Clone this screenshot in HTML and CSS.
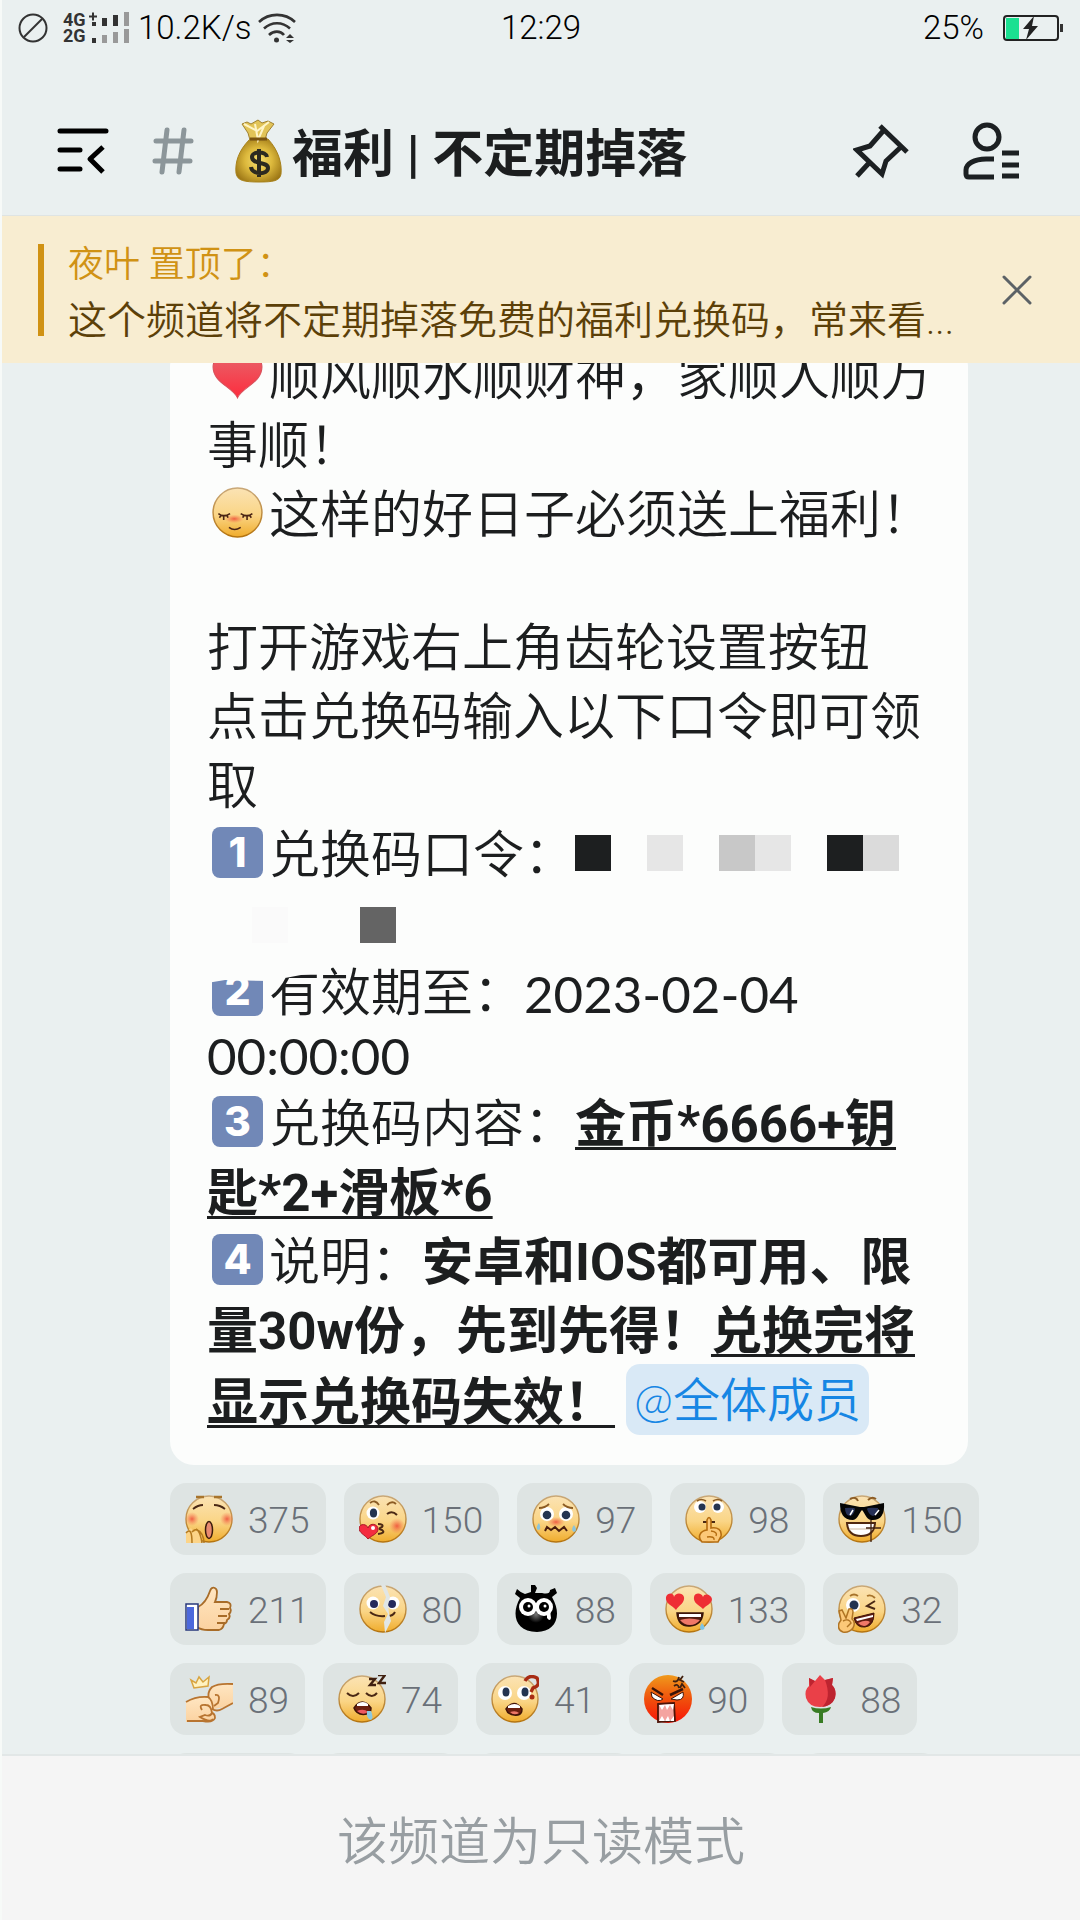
FILE: index.html
```html
<!DOCTYPE html>
<html lang="zh-CN">
<head>
<meta charset="utf-8">
<meta name="viewport" content="width=device-width, initial-scale=1">
<title>福利 | 不定期掉落</title>
<link rel="stylesheet" href="styles.css">
</head>
<body>
<svg class="defs" aria-hidden="true">
  <defs>
    <linearGradient id="skin" x1="0" y1="0" x2="0" y2="1"><stop offset="0" stop-color="#fbe3b4"/><stop offset="0.55" stop-color="#fad586"/><stop offset="1" stop-color="#f0ac2c"/></linearGradient>
    <linearGradient id="rim" x1="0" y1="0" x2="0" y2="1"><stop offset="0" stop-color="#c9a878"/><stop offset="1" stop-color="#b5740f"/></linearGradient>
    <linearGradient id="hand" x1="0" y1="0" x2="0" y2="1"><stop offset="0" stop-color="#ffe6c2"/><stop offset="1" stop-color="#fbd2a0"/></linearGradient>
    <linearGradient id="heart" x1="0" y1="0" x2="0" y2="1"><stop offset="0" stop-color="#e8636a"/><stop offset="1" stop-color="#fd2c3d"/></linearGradient>
    <linearGradient id="fury" x1="0" y1="0" x2="0" y2="1"><stop offset="0" stop-color="#f09a1c"/><stop offset="0.5" stop-color="#f0500c"/><stop offset="1" stop-color="#f81408"/></linearGradient>
    <radialGradient id="blush"><stop offset="0" stop-color="#ee4a38" stop-opacity="0.85"/><stop offset="1" stop-color="#f47850" stop-opacity="0"/></radialGradient>
    <radialGradient id="gold" cx="0.5" cy="0.5" r="0.6"><stop offset="0" stop-color="#f8e070"/><stop offset="0.5" stop-color="#dcb83c"/><stop offset="1" stop-color="#9a7414"/></radialGradient>
    <radialGradient id="soot" cx="0.5" cy="0.55" r="0.5"><stop offset="0" stop-color="#777"/><stop offset="0.6" stop-color="#000"/></radialGradient>
    <symbol id="face" viewBox="0 0 48 48"><circle cx="24" cy="24" r="23" fill="url(#skin)" stroke="url(#rim)" stroke-width="1.4"/></symbol>
  </defs>
</svg>

<header class="top">
  <div class="status">
    <div class="status-left">
      <svg width="30" height="30" viewBox="0 0 30 30" fill="none" stroke="#333" stroke-width="2"><circle cx="15" cy="15" r="13.5"/><path d="M6 24 24 6"/></svg>
      <div class="network">
        <div class="network-names"><span>4G</span><span>2G</span></div>
        <svg class="signal" width="42" height="32" viewBox="0 0 42 32"><path d="M1 4.500h8M5 .5v8" stroke="#333" stroke-width="2"/><path d="M4 10h4v4H4zM14 6h5v8h-5zM25 3h5v11h-5zM4 26h4v5H4z" fill="#333"/><path d="M36 0h5v14h-5zM14 23h5v8h-5zM25 20h5v11h-5zM36 17h5v14h-5z" fill="#999"/></svg>
      </div>
      <span class="status-text">10.2K/s</span>
      <svg class="wifi" width="38" height="30" viewBox="0 0 38 30" fill="none" stroke="#333" stroke-width="2.600"><path d="M1 9C11-.5 27-.5 37 9M6 15.500c7.500-7 18.500-7 26 0M11 22c4.500-4.500 11.500-4.500 15 0"/><circle cx="18.500" cy="27" r="2.500" fill="#333" stroke="none"/><path d="m28 25 4-4 4 4zM28 27l4 3 4-3z" fill="#333" stroke="none"/></svg>
    </div>
    <span class="status-text">12:29</span>
    <div class="status-right">
      <span class="status-text">25%</span>
      <svg width="61" height="26" viewBox="0 0 61 26"><rect x="1" y="1" width="54" height="24" rx="3" fill="none" stroke="#222" stroke-width="2"/><path d="M3 3h13v21H3z" fill="#1be091"/><path d="M57 9h3v8h-3z" fill="#333"/><path d="m31 1-11 13h6l-3 11 12-14h-6z" fill="#222"/></svg>
    </div>
  </div>
  <div class="channel">
    <button class="icon-button" type="button" aria-label="菜单"><svg width="52" height="48" viewBox="0 0 52 48" fill="none" stroke="#000" stroke-width="5" stroke-linecap="round" stroke-linejoin="round"><path d="M3 4h46M3 23h20M3 42h20"/><path d="M46 20 33 32l13 13" stroke-linecap="butt"/></svg></button>
    <svg class="hash" width="42" height="48" viewBox="0 0 42 48" fill="none" stroke="#8c969a" stroke-width="5" stroke-linecap="round"><path d="M15 3 10 45M32 3l-5 42M4 14h35M3 34h35"/></svg>
    <svg class="bag" width="48" height="64" viewBox="0 0 48 64"><path d="M15 20C3 32 0 44 1 54c1 8 9 9 23 9s21-1 22-8c1-10-2-23-13-35z" fill="url(#gold)" stroke="#a8821c"/><path d="m7 5 5-2 4 2 7-4 4 3 6-2 6 3-7 9-2 7H15l-2-7z" fill="#e2c458" stroke="#a08030"/><path d="m9 5 13 7 12-9M20 5l3 16 6-14" fill="none" stroke="#fff5c8" stroke-width="2"/><path d="M15 20h17" stroke="#7a5410" stroke-width="3"/><path d="M32 38c-1-6-15-6-15 0 0 8 16 4 16 11 0 7-16 7-17-1M24 30v28" fill="none" stroke="#2c2a20" stroke-width="4"/></svg>
    <h1 class="channel-title">福利 | 不定期掉落</h1>
    <button class="icon-button" type="button" aria-label="置顶消息"><svg width="56" height="56" viewBox="0 0 56 56" fill="none" stroke="#1c2022" stroke-width="5"><path d="m27 3 27 26M31 7 17 23 4 27l25 24 4-13 16-15M16 40 4 53"/></svg></button>
    <button class="icon-button" type="button" aria-label="成员"><svg width="58" height="58" viewBox="0 0 58 58" fill="none" stroke="#1c2022" stroke-width="5"><circle cx="25" cy="15" r="12"/><path d="M32 37h-8c-12 0-20 5-20 11v4q0 3 3 3h25M40 31h17M40 43h17M40 54h17"/></svg></button>
  </div>
</header>

<section class="pinned">
  <div class="pinned-text">
    <p class="pinned-by">夜叶 置顶了：</p>
    <p class="pinned-body">这个频道将不定期掉落免费的福利兑换码，常来看...</p>
  </div>
  <button class="icon-button" type="button" aria-label="关闭"><svg width="30" height="30" viewBox="0 0 30 30" stroke="#5c6266" stroke-width="3" stroke-linecap="round"><path d="m2 2 26 26M28 2 2 28"/></svg></button>
</section>

<main class="chat">
  <article class="bubble">
    <p class="line"><svg class="emoji" viewBox="0 0 48 48"><path d="M24 46C20 36 1 32 1 17 1 4 19 1 24 12 29 1 47 4 47 17c0 15-19 19-23 29z" fill="url(#heart)" stroke="#d8505a"/></svg>顺风顺水顺财神，家顺人顺万</p>
    <p class="line">事顺！</p>
    <p class="line"><svg class="emoji" viewBox="0 0 48 48"><use href="#face"/><ellipse cx="21" cy="30" rx="9" ry="4" fill="url(#blush)"/><path d="M6 25q5 4 11 0M27 25q6 4 11 0M16 38q5 4 11 0M7 29l2-3M11 31v-4M15 29l-1-3M29 29l1-3M33 31v-4M37 29l-2-3" fill="none" stroke="#4a2414" stroke-width="1.500"/></svg>这样的好日子必须送上福利！</p>
    <p class="line line-blank"></p>
    <p class="line">打开游戏右上角齿轮设置按钮</p>
    <p class="line">点击兑换码输入以下口令即可领</p>
    <p class="line">取</p>
    <p class="line"><span class="keycap">1</span>兑换码口令：<span class="mosaic"><i class="tile ink"></i><i class="tile"></i><i class="tile pale"></i><i class="tile"></i><i class="tile silver"></i><i class="tile pale"></i><i class="tile"></i><i class="tile ink"></i><i class="tile light"></i></span></p>
    <p class="line"><span class="mosaic mosaic-next"><i class="tile faint"></i><i class="tile"></i><i class="tile"></i><i class="tile gray"></i></span></p>
    <p class="line erased"><span class="keycap">2</span>有效期至：<time class="digits">2023-02-04</time><svg class="eraser" width="124" height="24" viewBox="0 0 124 24"><path d="M0 0h124v13l-30 3-16 3-14 3-46-1-18 3z" fill="#fcfdfc"/></svg></p>
    <p class="line line-time"><time class="digits">00:00:00</time></p>
    <p class="line"><span class="keycap">3</span>兑换码内容：<b><u>金币*6666+钥</u></b></p>
    <p class="line"><b><u>匙*2+滑板*6</u></b></p>
    <p class="line"><span class="keycap">4</span>说明：<b>安卓和IOS都可用、限</b></p>
    <p class="line"><b>量30w份，先到先得！<u>兑换完将</u></b></p>
    <p class="line line-last"><b><u>显示兑换码失效！</u></b><a class="mention" href="#members">@全体成员</a></p>
  </article>

  <div class="reactions">
    <button class="reaction" type="button"><svg viewBox="0 0 48 48"><use href="#face"/><circle cx="7" cy="24" r="7" fill="url(#blush)"/><circle cx="42" cy="24" r="7" fill="url(#blush)"/><path d="M11 2h8M29 2h8" stroke="#a8742c" stroke-width="2.500"/><path d="M8 14q5-4 10-4M29 10q6 0 11 4" fill="none" stroke="#4a2814" stroke-width="1.800"/><ellipse cx="24" cy="35" rx="3.500" ry="8.500" fill="#e88a70" stroke="#3c1c0c" stroke-width="1.500"/><path d="M1 48V37l5-4 3 4 5-3 3 6v8z" fill="#fcd488"/><path d="M1 38q6-7 6 10M7 37q7-8 10 11M11 34q8 4 8 14" fill="none" stroke="#b47a20" stroke-width="1.500"/></svg><span>375</span></button>
    <button class="reaction" type="button"><svg viewBox="0 0 48 48"><use href="#face"/><circle cx="38" cy="31" r="8" fill="url(#blush)"/><circle cx="14" cy="18" r="6.500" fill="#fff"/><ellipse cx="14.500" cy="18" rx="3.600" ry="4.500" fill="#243450"/><path d="M11 8q5-4 9 2M28 10q5-5 9-1" fill="none" stroke="#8c5c24" stroke-width="1.800"/><path d="M28 19q5-4 10 1M19 29q6 0 4 3-5 2 0 3 4 3-4 4" fill="none" stroke="#4a2814" stroke-width="2"/><path d="M9 44C6 40 0 38 0 33c1-5 8-4 9 0 2-6 10-4 10 1 0 5-6 6-10 10z" fill="#f42c40" stroke="#a81c28"/><circle cx="14" cy="33" r="2" fill="#fff"/></svg><span>150</span></button>
    <button class="reaction" type="button"><svg viewBox="0 0 48 48"><use href="#face"/><ellipse cx="24" cy="27" rx="9" ry="5" fill="url(#blush)"/><circle cx="15" cy="19" r="7" fill="#fff"/><circle cx="34" cy="19" r="7" fill="#fff"/><circle cx="15" cy="20" r="4.300" fill="#243450"/><circle cx="34" cy="20" r="4.300" fill="#243450"/><path d="M7 13q6 0 10-4M31 9q4 4 10 4" fill="none" stroke="#8c5c24" stroke-width="1.800"/><path d="m13 36 2-4 4 3 4-3 4 4 5-4 3 4" fill="none" stroke="#4a1c0c" stroke-width="2"/><path d="M7 28q-4 5-1 7 4 0 1-7zM42 30q-4 5 0 7 4-1 0-7z" fill="#8ac4dc"/></svg><span>97</span></button>
    <button class="reaction" type="button"><svg viewBox="0 0 48 48"><use href="#face"/><circle cx="15" cy="12" r="6" fill="#fff"/><circle cx="33" cy="12" r="6" fill="#fff"/><circle cx="17" cy="12" r="3.500" fill="#243450"/><circle cx="32" cy="12" r="3.500" fill="#243450"/><path d="M12 6q4-3 9 0M28 6q5-3 9 0" fill="none" stroke="#8c5c24" stroke-width="1.600"/><path d="M18 27h12" stroke="#4a2814" stroke-width="2"/><path d="M22 35V25q2-5 4 0v8c7-1 11 2 10 8l-3 6H17c-5-5-2-11 5-12z" fill="#fcc878" stroke="#b46c10" stroke-width="1.600"/><path d="M22 42q8-1 7 3M26 36q7 1 5 5" fill="none" stroke="#b46c10" stroke-width="1.400"/></svg><span>98</span></button>
    <button class="reaction" type="button"><svg viewBox="0 0 48 48"><use href="#face"/><path d="M12 4q6-3 8 2M30 5q4-4 8-1" fill="none" stroke="#8c5c24" stroke-width="2"/><path d="m2 8 20 4h4l20-4c1 12-4 18-13 17-5-1-6-7-9-10-3 3-4 9-9 10C5 25 2 18 2 8z" fill="#050505"/><path d="M7 13q10-1 10 1-1 6-5 7-5-1-5-8zM29 14q0-2 11-1 0 7-5 8-4-1-6-7z" fill="#263056"/><path d="m15 15-3 5M41 15l-4 5" stroke="#fff" stroke-width="1.500"/><path d="M9 28h28q-1 13-14 13T9 28z" fill="#fff" stroke="#502810" stroke-width="2"/><path d="M11 34h24" stroke="#cdb8a0"/><path d="M33 25v22M28 33h15" stroke="#402010" stroke-width="1.300"/></svg><span>150</span></button>

    <button class="reaction" type="button"><svg viewBox="0 0 48 48"><path d="M13 22q8-4 12-16c2-6 7-3 7 1 0 5-1 8-2 10h12q5 1 3 6 2 3-1 6 2 4-2 6 0 3-3 4-1 5-5 6H23q-7 0-11-3z" fill="url(#hand)" stroke="#a86c28" stroke-width="1.800"/><path d="M35 24h9M33 31h9M32 38h8" stroke="#a86c28" stroke-width="1.800"/><path d="M1 19h12v26H1z" fill="#fff" stroke="#28387c" stroke-width="1.500"/><path d="M2 22h7v22H2z" fill="#4c68dc"/></svg><span>211</span></button>
    <button class="reaction" type="button"><svg viewBox="0 0 48 48"><use href="#face"/><circle cx="14" cy="18" r="6.500" fill="#fff"/><circle cx="34" cy="18" r="6.500" fill="#fff"/><circle cx="15" cy="19" r="4" fill="#262a5c"/><circle cx="33" cy="19" r="4" fill="#262a5c"/><path d="M11 27q6 5 15 4M29 31q5 0 7-4" fill="none" stroke="#4a2814" stroke-width="2"/><path d="m22 0 5 12-3 9 5 8-4 8 1 11 6-12-2-8-1-8 2-8-5-13z" fill="#e1e6e5"/></svg><span>80</span></button>
    <button class="reaction" type="button"><svg viewBox="0 0 48 48"><path d="M19 0h4l2 3-2 5h7q8 2 8-3l5-2 2 5-5 4c11 19 3 35-15 35C3 47-1 29 8 13L3 9l2-5q4 4 8 5l6-2z" fill="#000"/><circle cx="24" cy="28" r="14" fill="url(#soot)"/><circle cx="16" cy="22" r="9" fill="#fff"/><circle cx="32" cy="22" r="9" fill="#fff"/><circle cx="16" cy="22" r="5" fill="#000"/><circle cx="32" cy="22" r="5" fill="#000"/><circle cx="17" cy="21" r="1.500" fill="#fff"/><circle cx="33" cy="21" r="1.500" fill="#fff"/><path d="M35 27v6q3 4 4 0l-1-8z" fill="#fff"/></svg><span>88</span></button>
    <button class="reaction" type="button"><svg viewBox="0 0 48 48"><use href="#face"/><path d="M11 25C7 20 0 19 1 12c2-5 8-4 8 0 1-4 8-5 10 0 1 6-5 8-8 13zM38 24c-4-4-10-6-9-12 1-5 8-4 9 0 1-4 8-3 9 2 0 5-6 6-9 10z" fill="#ee2e34"/><path d="M12 28h26q-1 12-13 13T12 28z" fill="#501c10" stroke="#381408" stroke-width="1.500"/><path d="M14 29h22v3H14z" fill="#fff"/><path d="M15 35q9-3 20 0-4 5-10 5t-10-5z" fill="#f07868"/><path d="M37 38q-4 6 0 7 5-1 0-7z" fill="#7cc4e8"/></svg><span>133</span></button>
    <button class="reaction" type="button"><svg viewBox="0 0 48 48"><use href="#face"/><circle cx="15" cy="20" r="7" fill="#fff"/><circle cx="16" cy="20" r="4.500" fill="#243450"/><path d="M12 11q4-3 8 0M29 11q4-2 8 2" fill="none" stroke="#a8742c" stroke-width="1.800"/><path d="m37 16-8 5 8 3" fill="none" stroke="#4a2814" stroke-width="2"/><path d="m16 33 20-5q0 13-9 14t-11-9z" fill="#601c10" stroke="#401408"/><path d="m18 34 17-4v2l-16 4z" fill="#fff"/><path d="M20 38q8-4 12-1-3 4-6 4t-6-3z" fill="#f07868"/><path d="m1 26 3-1 4 8 3-9q4-1 4 3l-1 7q4 3 1 9-4 5-10 4-6-2-4-9l2-3z" fill="#fcc878" stroke="#b07424" stroke-width="1.500"/><path d="M5 36q6-3 8 2l-4 4" fill="none" stroke="#b07424" stroke-width="1.400"/></svg><span>32</span></button>

    <button class="reaction" type="button"><svg viewBox="0 0 48 48"><path d="m6 5 3 8 14-2 1-9-6 5-4-5-3 6z" fill="#fff2c0" stroke="#d8a440" stroke-width="1.500"/><path d="M48 9q-14-1-21 3l-4 10 6 12 10-2 9-3z" fill="url(#hand)"/><path d="M48 9q-15-1-21 3-5 5-3 12l3 10q5 3 10 0l11-6M30 20q6-1 3 8l-4 3" fill="none" stroke="#b87430" stroke-width="1.800"/><path d="M1 27q10-6 22-5 5 4 5 14 4 7-3 11H1z" fill="url(#hand)"/><path d="M1 27q10-6 22-5 5 3 5 13M17 35q-4-6 4-5 5 0 6 8-2 4-7 2l-5 2q10 6 13 2M2 46h16q10 2 12-3 0-5-4-5" fill="none" stroke="#b87430" stroke-width="1.800"/></svg><span>89</span></button>
    <button class="reaction" type="button"><svg viewBox="0 0 48 48"><use href="#face"/><path d="M9 18q6 6 12 0M28 18q6 6 11 0" fill="none" stroke="#4a2814" stroke-width="2"/><path d="M16 33q8-12 17 0 0 5-4 6-10 2-13-6z" fill="#6c2010" stroke="#401408" stroke-width="1.500"/><path d="M19 29q6-4 11 0v2H19z" fill="#fff"/><path d="M19 36q7-3 11 1-5 4-11-1z" fill="#ee5860"/><path d="M29 36h4q3 7 0 9-5-1-4-9z" fill="#8cc8e0"/><path d="M31 4h6l-5 6h6M40 0h7l-6 8h7" fill="none" stroke="#402010" stroke-width="2.400"/></svg><span>74</span></button>
    <button class="reaction" type="button"><svg viewBox="0 0 48 48"><use href="#face"/><circle cx="14" cy="18" r="7" fill="#fff"/><circle cx="33" cy="18" r="7" fill="#fff"/><ellipse cx="15" cy="17" rx="3.500" ry="4.500" fill="#243450"/><ellipse cx="34" cy="17" rx="3.500" ry="4.500" fill="#243450"/><path d="M15 34q8-11 16 0 0 5-4 6-10 1-12-6z" fill="#6c2010" stroke="#401408" stroke-width="1.500"/><path d="M17 31q7-4 12 0v2H17z" fill="#fff"/><path d="M19 37q6-2 9 1-5 3-9-1z" fill="#ee7868"/><path d="M34 6q4-7 12-3 4 8-4 10l-2 4" fill="none" stroke="#a82c14" stroke-width="3.400"/><circle cx="41" cy="22" r="2.500" fill="#a82c14"/></svg><span>41</span></button>
    <button class="reaction" type="button"><svg viewBox="0 0 48 48"><circle cx="24" cy="24" r="24" fill="url(#fury)"/><path d="m7 17 12 7q-5 4-11-2zM27 24l12-7q2 8-6 8z" fill="#fff" stroke="#3c1408"/><path d="m8 13 11 7M26 20l13-6" stroke="#3c1408" stroke-width="2.500"/><path d="m14 29 16-1 1 18-17 1z" fill="#f4a4a0" stroke="#4c1408" stroke-width="1.800"/><path d="m15 30 3 5 3-5 2 5 3-5 3 5 1-6zM15 46l3-5 3 5 3-5 2 5 4-5v5z" fill="#fff"/><path d="M29 6q5 2 6-4M39 1l-3 4 4 2M30 11q4-3 5 2M36 13l2-4 3 4" fill="none" stroke="#402010" stroke-width="1.800"/></svg><span>90</span></button>
    <button class="reaction" type="button"><svg viewBox="0 0 48 48"><path d="m12 3 6 3 5-6 5 5 8-2-1 7q5 4 3 13-4 9-15 9T9 23q-2-8 3-12z" fill="#ea4048"/><path d="m28 5 8-2-1 7q5 5 3 13-3 8-13 9 10-9 3-27zM12 3l6 3-5 6z" fill="#bd2430"/><path d="M14 32q10 3 20 0-1 5-8 6v10h-4V38q-7 0-8-6z" fill="#387c24"/></svg><span>88</span></button>

    <span class="reaction reaction-empty"></span>
    <span class="reaction reaction-empty"></span>
    <span class="reaction reaction-empty reaction-wide"></span>
    <span class="reaction reaction-empty"></span>
    <span class="reaction reaction-empty"></span>
  </div>
</main>

<footer class="readonly">该频道为只读模式</footer>
</body>
</html>
```
FILE: styles.css
```css
* {
  box-sizing: border-box;
}

body {
  display: flex;
  flex-direction: column;
  height: 100vh;
  margin: 0;
  border-left: 2px solid #f7faf8;
  overflow: hidden;
  background: #eaf0f0;
  color: #1c1e1f;
  font-family: Roboto, "Noto Sans CJK SC", sans-serif;
  font-weight: 350;
}

p,
h1 {
  margin: 0;
}

svg {
  display: block;
  flex: none;
}

button {
  padding: 0;
  border: 0;
  background: none;
  color: inherit;
  font: inherit;
}

.defs {
  position: absolute;
  width: 0;
  height: 0;
}

/* Status bar and channel header */

.top {
  flex: none;
  border-bottom: 1px solid #dfe4e3;
}

.status {
  display: grid;
  grid-template-columns: 1fr auto 1fr;
  align-items: center;
  height: 56px;
  padding: 0 16px;
}

.status-left,
.status-right {
  display: flex;
  align-items: center;
}

.status-right {
  justify-content: flex-end;
  gap: 19px;
}

.status-text {
  color: #000;
  font-size: 33px;
  line-height: 56px;
}

.network {
  display: flex;
  margin: 0 8px 0 15px;
}

.network-names {
  display: flex;
  flex-direction: column;
  width: 25px;
  color: #333;
  font-size: 18px;
  font-weight: 700;
  line-height: 16px;
}

.wifi {
  margin-left: 6px;
}

.channel {
  display: flex;
  align-items: center;
  height: 128px;
  margin-top: 31px;
  padding: 0 60px 0 55px;
}

.hash {
  margin-left: 43px;
}

.bag {
  margin-left: 41px;
}

.channel-title {
  flex: 1;
  margin-left: 9px;
  padding-top: 8px;
  font-size: 51px;
  font-weight: 700;
  line-height: 72px;
  white-space: nowrap;
}

.channel .icon-button + .icon-button {
  margin-left: 53px;
}

/* Pinned notice */

.pinned {
  display: flex;
  flex: none;
  align-items: center;
  justify-content: space-between;
  height: 147px;
  padding: 0 48px 0 36px;
  background: #f8edd1;
}

.pinned-text {
  display: flex;
  flex-direction: column;
  justify-content: center;
  height: 92px;
  padding: 6px 0 0 24px;
  border-left: 6px solid #d09214;
  white-space: nowrap;
}

.pinned-by {
  color: #d09214;
  font-size: 36px;
  line-height: 56px;
}

.pinned-body {
  color: #5c4008;
  font-size: 39px;
  line-height: 56px;
}

/* Message */

.chat {
  flex: 1;
  min-height: 0;
  padding: 0 90px 0 168px;
  overflow: hidden;
}

.bubble {
  width: 798px;
  max-width: 100%;
  margin-top: -20px;
  padding: 0 37px 26px;
  border-radius: 24px;
  background: #fcfdfc;
  font-size: 51px;
}

.line {
  display: flex;
  align-items: center;
  height: 69px;
  line-height: 69px;
  white-space: nowrap;
}

.line-blank {
  height: 64px;
}

.line-time {
  align-items: flex-start;
  height: 62px;
  line-height: 56px;
}

.line-last {
  height: 73px;
}

.line b {
  font-weight: 700;
}

.line u {
  text-decoration-thickness: 3px;
  text-decoration-skip-ink: none;
  text-underline-offset: 5px;
}

.digits {
  font-family: Lato, sans-serif;
  font-weight: 400;
}

.emoji,
.keycap {
  width: 51px;
  height: 51px;
  margin: 0 6px 6px 5px;
}

.keycap {
  border-radius: 8px;
  background: #7188b7;
  color: #fff;
  font-family: Inter, sans-serif;
  font-size: 41px;
  font-weight: 800;
  line-height: 51px;
  text-align: center;
}

.mosaic {
  display: flex;
  margin-bottom: 6px;
}

.mosaic-next {
  margin-left: 45px;
}

.mosaic-next {
  margin-bottom: 0;
}

.tile {
  width: 36px;
  height: 36px;
}

.ink { background: #1d1f20; }
.pale { background: #e6e6e6; }
.silver { background: #c8c8c8; }
.light { background: #dbdbdb; }
.faint { background: #fafafa; }
.gray { background: #646464; }

.erased {
  position: relative;
}

.eraser {
  position: absolute;
  top: 0;
  left: 0;
}

.mention {
  margin: 0 0 6px 11px;
  padding: 0 8px;
  border-radius: 14px;
  background: #d9e9f6;
  color: #1686e4;
  font-family: Lato, "Noto Sans CJK SC", sans-serif;
  font-size: 47px;
  line-height: 71px;
  text-decoration: none;
}

/* Reactions */

.reactions {
  display: flex;
  flex-wrap: wrap;
  gap: 18px;
  margin-top: 18px;
}

.reaction {
  display: flex;
  align-items: center;
  gap: 15px;
  height: 72px;
  padding: 0 16px 0 15px;
  border-radius: 16px;
  background: #dee4e3;
  color: #6a7078;
  font-size: 37px;
  line-height: 72px;
}

.reaction span {
  padding-top: 4px;
}

.reaction svg {
  width: 48px;
  height: 48px;
}

.reaction-empty {
  width: 135px;
}

.reaction-wide {
  width: 156px;
}

.readonly {
  flex: none;
  height: 166px;
  padding-top: 10px;
  border-top: 2px solid #e2e7e7;
  background: #f5f5f5;
  color: #989ea2;
  font-size: 51px;
  line-height: 154px;
  text-align: center;
}
```
